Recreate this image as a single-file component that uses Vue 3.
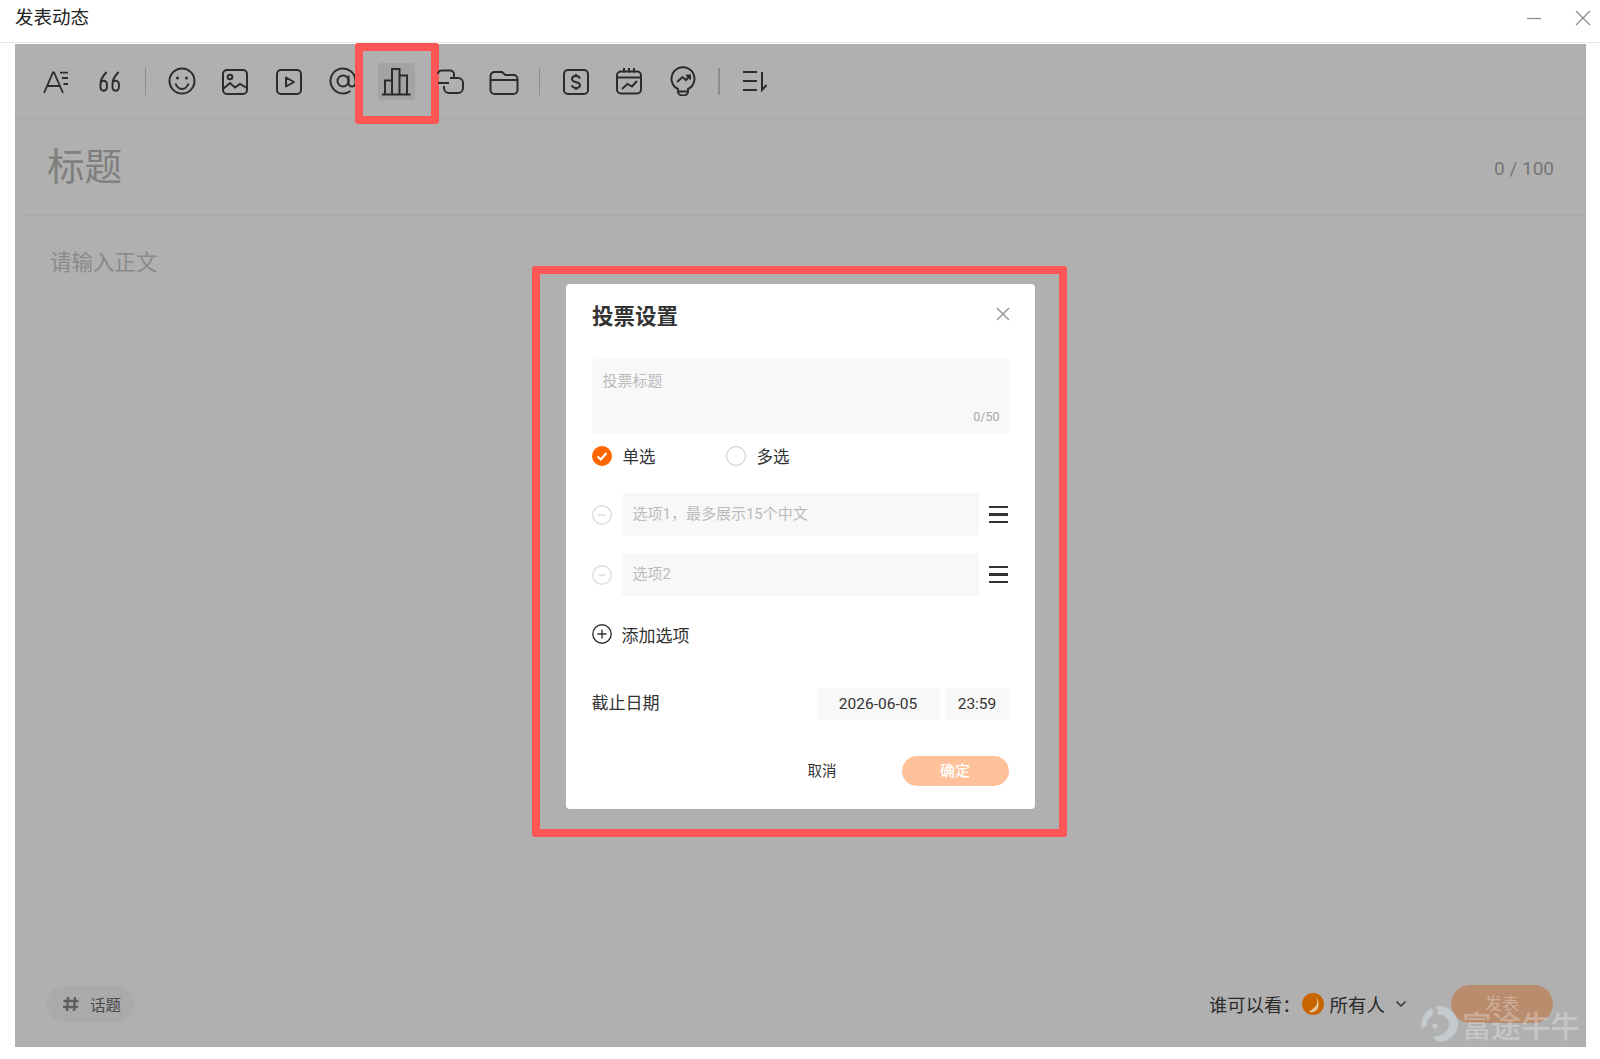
<template>
  <div class="page">
    <!-- window title -->
    <header class="titleBar">
      <span class="titleText">发表动态</span>
      <div class="winBtns">
        <svg width="16" height="16" viewBox="0 0 16 16"><path d="M1 8.500H15" /></svg>
        <svg width="16" height="16" viewBox="0 0 16 16"><path d="M1 1L15 15M15 1L1 15" /></svg>
      </div>
    </header>

    <main class="panel">
      <!-- toolbar -->
      <div class="toolbar">
        <button class="tool">
          <svg class="ico" viewBox="0 0 30 30"><path d="M3 27L12 6.500H13L22 27M6 20H19M19 6.700H27M21 12H27M22.500 18H27" stroke-width="1.800" /></svg>
        </button>
        <button class="tool">
          <svg class="ico" viewBox="0 0 30 30"><path d="M11.500 6C8 10 5.500 13 5.500 17V21.500a3.200 3.200 0 0 0 6.400 0V18a3.200 3.200 0 0 0-6.400 0M23.500 6C20 10 17.500 13 17.500 17V21.500a3.200 3.200 0 0 0 6.400 0V18a3.200 3.200 0 0 0-6.400 0" stroke-width="1.900" /></svg>
        </button>
        <i class="toolDivider"></i>
        <button class="tool">
          <svg class="ico" viewBox="0 0 30 30"><circle cx="15" cy="15" r="12.500" /><circle class="dot" cx="10.500" cy="12" r="1.500" /><circle class="dot" cx="19.500" cy="12" r="1.500" /><path d="M8.500 17.500c1.500 4 4 5.500 6.500 5.500s5-1.500 6.500-5.500" /></svg>
        </button>
        <button class="tool">
          <svg class="ico" viewBox="0 0 30 30"><rect x="3" y="4" width="24" height="24" rx="4" /><circle cx="10" cy="11" r="2.300" /><path d="M3 23L10 17L15 21.500L20 18L27 22" /></svg>
        </button>
        <button class="tool">
          <svg class="ico" viewBox="0 0 30 30"><rect x="3" y="4" width="24" height="24" rx="4" /><path d="M12 11.500V20.500L20 16Z" stroke-linejoin="round" /></svg>
        </button>
        <button class="tool">
          <svg class="ico" viewBox="0 0 30 30"><circle cx="15" cy="15" r="5.500" /><path d="M20.500 9.500V17a3.500 3.500 0 0 0 7 0V15a12.500 12.500 0 1 0-5 10" /></svg>
        </button>
        <button class="tool active">
          <svg class="ico" viewBox="0 0 30 30"><path d="M1 28.500H29.500M4 28V14.500H11M11 28V3H18.500V28M18.500 9.500H26V28" /></svg>
          <i class="redBox"></i>
        </button>
        <button class="tool">
          <svg class="ico" viewBox="0 0 30 30"><path d="M3 8a3.500 3.500 0 0 1 3.500-3.500H15a4 4 0 0 1 4 4V12M3 17H14M15 12H23a5 5 0 0 1 5 5V22a5 5 0 0 1-5 5H14a5 5 0 0 1-5-5V20" /></svg>
        </button>
        <button class="tool">
          <svg class="ico" viewBox="0 0 30 30"><path d="M1.500 10a4 4 0 0 1 4-4H13L16.500 9H24.500a4 4 0 0 1 4 4V24a4 4 0 0 1-4 4H5.500a4 4 0 0 1-4-4ZM1.500 14H28.500" /></svg>
        </button>
        <i class="toolDivider"></i>
        <button class="tool">
          <svg class="ico" viewBox="0 0 30 30"><rect x="3" y="4" width="24" height="24" rx="4" /><path d="M19 12.500c-.5-1.500-2-2.500-4-2.500c-2.500 0-4 1.300-4 3c0 4.500 8 2 8 6c0 1.800-1.700 3-4 3c-2 0-3.700-1-4.200-2.700M15 8V10M15 22V24" /></svg>
        </button>
        <button class="tool">
          <svg class="ico" viewBox="0 0 30 30"><rect x="3" y="5.500" width="24" height="22" rx="4" /><path d="M3 11.500H27M10 2V6.500M15 2V6.500M20 2V6.500M8 23L13.500 18L18 20.500L23 15" /></svg>
        </button>
        <button class="tool">
          <svg class="ico" viewBox="0 0 30 30"><path d="M10 23a11.500 11.500 0 1 1 10 0V26a5 3.500 0 0 1-10 0ZM10 25.500H20M9 16L14.500 11L18 14L22 9.500M18 9.500H22V13.500" /></svg>
        </button>
        <i class="toolDivider"></i>
        <button class="tool">
          <svg class="ico" viewBox="0 0 30 30"><path d="M3 6H17M3 15H17M3 24H17M22 6V24L26.500 19" /></svg>
        </button>
      </div>

      <!-- post title -->
      <div class="postTitle">
        <span class="postTitleHolder">标题</span>
        <span class="postCount">0 / 100</span>
      </div>

      <!-- post body -->
      <div class="postBody">请输入正文</div>

      <!-- bottom row -->
      <footer class="postFooter">
        <div class="topicPill">
          <svg width="18" height="18" viewBox="0 0 18 18"><path d="M6 2L5 16M13 2L12 16M1.500 6H16.500M1 12H16" /></svg>
          <span>话题</span>
        </div>
        <div class="postRight">
          <span class="whoLabel">谁可以看：</span>
          <svg class="everyone" width="22" height="22" viewBox="0 0 22 22">
            <circle cx="11" cy="11" r="11" fill="#c96500" />
            <path d="M13.500 3C15.500 7 16 11 13 14C11.500 15.500 9.500 16.500 7 19C11 20 15.500 18 16.500 13.500C17 10 16 6 13.500 3Z" fill="#e6c49a" />
          </svg>
          <span class="whoValue">所有人</span>
          <svg class="chevron" width="12" height="8" viewBox="0 0 12 8"><path d="M1.500 1.500L6 6L10.500 1.500" /></svg>
          <button class="publishBtn">发表</button>
        </div>
      </footer>

      <!-- vote dialog -->
      <div class="dialogLayer">
        <section class="dialog">
          <i class="dialogRedBox"></i>
          <div class="dialogHead">
            <h2>投票设置</h2>
            <svg width="14" height="14" viewBox="0 0 14 14"><path d="M1 1L13 13M13 1L1 13" /></svg>
          </div>

          <div class="voteTitle">
            <span class="holder">投票标题</span>
            <span class="voteCount">0/50</span>
          </div>

          <div class="radioRow">
            <label class="radio first">
              <svg width="20" height="20" viewBox="0 0 20 20"><circle cx="10" cy="10" r="10" fill="#ff6600" /><path d="M5.500 10.500L8.800 13.500L14.500 7" fill="none" stroke="#fff" stroke-width="2.200" /></svg>
              单选
            </label>
            <label class="radio">
              <i class="radioEmpty"></i>
              多选
            </label>
          </div>

          <div v-for="option in options" :key="option" class="optionRow">
            <svg width="20" height="20" viewBox="0 0 20 20"><circle cx="10" cy="10" r="9.250" fill="none" stroke="#dcdcdc" stroke-width="1.300" /><path d="M6 10H14" stroke="#dcdcdc" stroke-width="1.300" /></svg>
            <div class="optionInput">{{ option }}</div>
            <div class="dragHandle"><i></i><i></i><i></i></div>
          </div>

          <div class="addRow">
            <svg width="20" height="20" viewBox="0 0 20 20"><circle cx="10" cy="10" r="9.200" fill="none" stroke="#333" stroke-width="1.400" /><path d="M10 5.500V14.500M5.500 10H14.500" stroke="#333" stroke-width="1.400" /></svg>
            添加选项
          </div>

          <div class="deadlineRow">
            <span class="deadlineLabel">截止日期</span>
            <div class="dateBox">2026-06-05</div>
            <div class="timeBox">23:59</div>
          </div>

          <div class="dialogActions">
            <span class="cancelBtn">取消</span>
            <button class="okBtn">确定</button>
          </div>
        </section>
      </div>
    </main>

    <!-- watermark -->
    <div class="watermark">
      <svg width="38" height="38" viewBox="0 0 38 38" fill="#c4cbce">
        <path d="M14 1.500C24-1 35 6 37 17C38 26 31 35 21 37C16 37.500 14 35 12 31C20 33 28 26 28 19C28 14 23 9 16 9.500C18 6 17 3 14 1.500Z" />
        <path d="M10 3C12 5 13 8 11 11C7 13 5 17 6 21C4 21 2 22 1 24C-1 15 3 7 10 3Z" />
        <circle cx="14" cy="21" r="2.600" />
      </svg>
      <span>富途牛牛</span>
    </div>
  </div>
</template>

<script setup>
const options = ["选项1，最多展示15个中文", "选项2"];
</script>

<style>
html,
body {
  margin: 0;
  background: #fff;
}
</style>

<style scoped>
.page {
  position: relative;
  width: 1600px;
  height: 1059px;
  display: flex;
  flex-direction: column;
  overflow: hidden;
  background: #fff;
  font-family: Roboto, "Noto Sans CJK SC", sans-serif;
  color: #333;
}

.titleBar {
  height: 42px;
  flex: none;
  display: flex;
  align-items: flex-start;
  justify-content: space-between;
  padding: 0 9px 0 15px;
  border-bottom: 1px solid #e8e8e8;
}

.titleText {
  font-size: 18.500px;
  line-height: 37px;
  color: #222;
}

.winBtns {
  display: flex;
  gap: 33px;
  margin-top: 10px;
}

.winBtns path {
  fill: none;
  stroke: #888;
  stroke-width: 1.200;
}

.panel {
  position: relative;
  flex: none;
  display: flex;
  flex-direction: column;
  height: 1003px;
  margin: 1px 14px 0 15px;
  background: #b0b0b0;
}

.toolbar {
  height: 74px;
  flex: none;
  display: flex;
  align-items: center;
  gap: 16.700px;
  padding-left: 22.500px;
  border-bottom: 1px solid #a9a9a9;
}

.tool {
  position: relative;
  width: 37px;
  height: 37px;
  padding: 0;
  display: flex;
  align-items: center;
  justify-content: center;
  border: none;
  border-radius: 4px;
  background: transparent;
}

.tool.active {
  background: #a3a3a3;
}

.ico {
  width: 30px;
  height: 30px;
  flex: none;
  fill: none;
  stroke: #2c2c2c;
  stroke-width: 2;
}

.ico .dot {
  fill: #2c2c2c;
  stroke: none;
}

.toolDivider {
  width: 1.500px;
  height: 27px;
  flex: none;
  background: #8d8d8d;
}

.redBox {
  position: absolute;
  top: -20px;
  left: -23px;
  right: -24px;
  bottom: -24px;
  border: 8px solid #fe5555;
  border-radius: 3px;
  pointer-events: none;
}

.postTitle {
  height: 96px;
  flex: none;
  display: flex;
  align-items: center;
  justify-content: space-between;
  margin: 0 2px 0 5px;
  padding: 0 30px 0 27px;
  border-bottom: 1px solid #a9a9a9;
}

.postTitleHolder {
  font-size: 37.500px;
  line-height: 50px;
  color: #7f7f7f;
}

.postCount {
  font-size: 19px;
  padding-top: 2px;
  color: #767676;
}

.postBody {
  flex: 1;
  padding: 32px 0 0 35px;
  font-size: 21.500px;
  line-height: 30px;
  color: #8a8a8a;
}

.postFooter {
  height: 36px;
  flex: none;
  display: flex;
  align-items: center;
  justify-content: space-between;
  padding: 0 33px 25px 32px;
}

.topicPill {
  height: 36px;
  width: 87px;
  box-sizing: border-box;
  display: flex;
  align-items: center;
  gap: 10px;
  padding-left: 15px;
  border-radius: 18px;
  background: #aaaaaa;
  font-size: 15.500px;
  color: #4a4a4a;
}

.topicPill path {
  fill: none;
  stroke: #5e5e5e;
  stroke-width: 2.400;
}

.postRight {
  display: flex;
  align-items: center;
  color: #2a2a2a;
}

.whoLabel {
  font-size: 18.300px;
}

.everyone {
  margin-left: 2px;
}

.whoValue {
  font-size: 18.500px;
  margin-left: 5px;
}

.chevron {
  margin-left: 10px;
}

.chevron path {
  fill: none;
  stroke: #333;
  stroke-width: 1.500;
}

.publishBtn {
  width: 102px;
  height: 38px;
  margin-left: 44px;
  padding: 0 0 3px;
  border: none;
  border-radius: 19px;
  background: #b98c6d;
  color: #cfae98;
  font-family: inherit;
  font-size: 17px;
}

.dialogLayer {
  position: absolute;
  inset: 0;
  box-sizing: border-box;
  padding-top: 2px;
  display: flex;
  align-items: center;
  justify-content: center;
}

.dialog {
  position: relative;
  width: 469px;
  box-sizing: border-box;
  padding: 0 26.500px 23px 25.500px;
  border-radius: 4px;
  background: #fff;
}

.dialogRedBox {
  position: absolute;
  top: -18px;
  left: -34px;
  right: -32px;
  bottom: -28px;
  border: 8px solid #fe5555;
  border-radius: 3px;
  pointer-events: none;
}

.dialogHead {
  height: 62px;
  box-sizing: border-box;
  padding: 0 0 2px 0.500px;
  margin-right: -1px;
  display: flex;
  align-items: center;
  justify-content: space-between;
}

.dialogHead h2 {
  margin: 0;
  font-size: 21.500px;
  font-weight: 700;
  color: #333;
}

.dialogHead path {
  fill: none;
  stroke: #999;
  stroke-width: 1.500;
}

.voteTitle {
  position: relative;
  height: 75px;
  margin-top: 13px;
  box-sizing: border-box;
  padding: 11px 11px;
  border-radius: 2px;
  background: #f8f8f8;
}

.holder {
  font-size: 15px;
  line-height: 22px;
  color: #bbb;
}

.voteCount {
  position: absolute;
  right: 9px;
  bottom: 10px;
  font-size: 12.500px;
  color: #a6a6a6;
}

.radioRow {
  display: flex;
  height: 22px;
  margin-top: 11px;
}

.radio {
  display: flex;
  align-items: center;
  gap: 11px;
  font-size: 16.500px;
}

.radio.first {
  width: 134px;
}

.radioEmpty {
  width: 20px;
  height: 20px;
  box-sizing: border-box;
  border: 1.200px solid #c8c8c8;
  border-radius: 50%;
}

.optionRow {
  height: 43px;
  margin-top: 17px;
  display: flex;
  align-items: center;
}

.radioRow + .optionRow {
  margin-top: 26px;
}

.optionInput {
  width: 357px;
  height: 43px;
  margin-left: 10px;
  box-sizing: border-box;
  padding-left: 11px;
  line-height: 42px;
  border-radius: 2px;
  background: #f8f8f8;
  font-size: 15px;
  color: #bbb;
}

.dragHandle {
  display: flex;
  flex-direction: column;
  gap: 5px;
  margin-left: 10px;
}

.dragHandle i {
  display: block;
  width: 19px;
  height: 2.300px;
  background: #333;
}

.addRow {
  height: 22px;
  margin-top: 27px;
  display: flex;
  align-items: center;
  gap: 10px;
  font-size: 17px;
}

.deadlineRow {
  display: flex;
  align-items: center;
  margin-top: 43px;
}

.deadlineLabel {
  flex: 1;
  padding-bottom: 5px;
  font-size: 17px;
}

.dateBox,
.timeBox {
  height: 32px;
  line-height: 32px;
  text-align: center;
  border-radius: 2px;
  background: #f8f8f8;
  font-size: 15.500px;
}

.dateBox {
  width: 123px;
}

.timeBox {
  width: 63px;
  margin-left: 6px;
}

.dialogActions {
  display: flex;
  align-items: center;
  justify-content: flex-end;
  margin-top: 36px;
}

.cancelBtn {
  padding-bottom: 4px;
  margin-right: 65px;
  font-size: 14.500px;
}

.okBtn {
  width: 107px;
  height: 30px;
  padding: 0 0 4px;
  border: none;
  border-radius: 15px;
  background: #ffc199;
  color: #fff;
  font-family: inherit;
  font-size: 15px;
  font-weight: 500;
}

.watermark {
  position: absolute;
  left: 1421px;
  top: 1003px;
  display: flex;
  align-items: center;
  gap: 3px;
  color: rgba(255, 255, 255, 0.3);
  font-size: 29.500px;
  font-weight: 500;
  pointer-events: none;
}
</style>
